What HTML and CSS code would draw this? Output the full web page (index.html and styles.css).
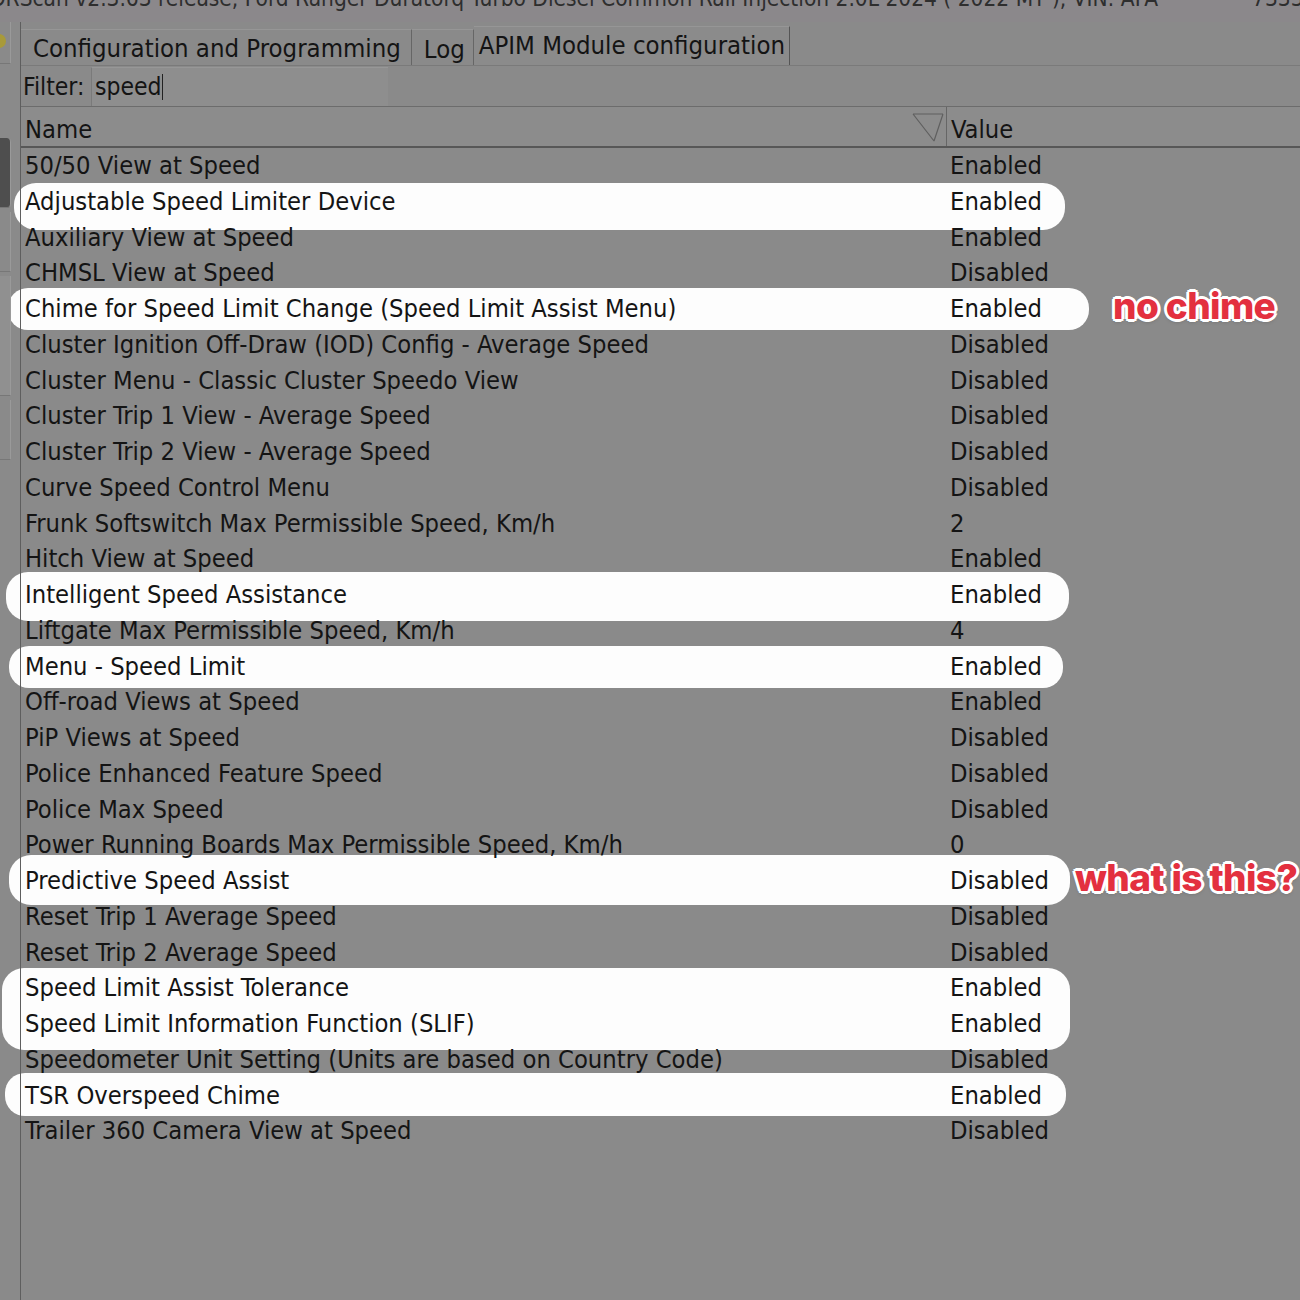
FILE: index.html
```html
<!DOCTYPE html>
<html lang="en">
<head>
  <meta charset="UTF-8" />
  <title>FORScan - APIM Module configuration</title>
  <link rel="stylesheet" href="styles.css">
</head>
<body>
  <div class="marks">
    <div class="pill pill-asld"></div>
    <div class="pill pill-chime"></div>
    <div class="pill pill-isa"></div>
    <div class="pill pill-menu"></div>
    <div class="pill pill-psa"></div>
    <div class="pill pill-slat"></div>
    <div class="pill pill-tsr"></div>
    <div class="note note-chime">no chime</div>
    <div class="note note-what">what is this?</div>
  </div>

  <div class="titlebar">
    <div class="title-text">FORScan v2.3.63 release, Ford Ranger Duratorq Turbo Diesel Common Rail Injection 2.0L 2024 ( 2022 MY ), VIN: AFA<span class="vin-tail">7333</span></div>
  </div>

  <div class="window">
    <div class="sidebar">
      <div class="side-btn side-btn-top"><span class="side-dot"></span></div>
      <div class="side-btn side-btn-dark"></div>
      <div class="side-btn side-btn-plain"></div>
      <div class="side-btn side-btn-light"></div>
      <div class="side-btn side-btn-plain"></div>
    </div>

    <div class="main">
      <div class="tabs">
        <div class="tab">Configuration and Programming</div>
        <div class="tab tab-log">Log</div>
        <div class="tab tab-active">APIM Module configuration</div>
      </div>

      <div class="filter">
        <label class="filter-label">Filter:</label>
        <div class="filter-input">speed<span class="caret"></span></div>
      </div>

      <div class="grid">
        <div class="grid-head">
          <div class="col-name">Name
            <svg class="sort" width="32" height="30" viewBox="0 0 32 30">
              <path d="M1 2 H31 M1 2 L22 29 M31 2 L22 29" fill="none" stroke="#5f5f5f" stroke-width="1.2"/>
            </svg>
          </div>
          <div class="col-value">Value</div>
        </div>
        <div id="rows"></div>
      </div>
    </div>
  </div>

  <script>
    var params = [
      ["50/50 View at Speed", "Enabled"],
      ["Adjustable Speed Limiter Device", "Enabled"],
      ["Auxiliary View at Speed", "Enabled"],
      ["CHMSL View at Speed", "Disabled"],
      ["Chime for Speed Limit Change (Speed Limit Assist Menu)", "Enabled"],
      ["Cluster Ignition Off-Draw (IOD) Config - Average Speed", "Disabled"],
      ["Cluster Menu - Classic Cluster Speedo View", "Disabled"],
      ["Cluster Trip 1 View - Average Speed", "Disabled"],
      ["Cluster Trip 2 View - Average Speed", "Disabled"],
      ["Curve Speed Control Menu", "Disabled"],
      ["Frunk Softswitch Max Permissible Speed, Km/h", "2"],
      ["Hitch View at Speed", "Enabled"],
      ["Intelligent Speed Assistance", "Enabled"],
      ["Liftgate Max Permissible Speed, Km/h", "4"],
      ["Menu - Speed Limit", "Enabled"],
      ["Off-road Views at Speed", "Enabled"],
      ["PiP Views at Speed", "Disabled"],
      ["Police Enhanced Feature Speed", "Disabled"],
      ["Police Max Speed", "Disabled"],
      ["Power Running Boards Max Permissible Speed, Km/h", "0"],
      ["Predictive Speed Assist", "Disabled"],
      ["Reset Trip 1 Average Speed", "Disabled"],
      ["Reset Trip 2 Average Speed", "Disabled"],
      ["Speed Limit Assist Tolerance", "Enabled"],
      ["Speed Limit Information Function (SLIF)", "Enabled"],
      ["Speedometer Unit Setting (Units are based on Country Code)", "Disabled"],
      ["TSR Overspeed Chime", "Enabled"],
      ["Trailer 360 Camera View at Speed", "Disabled"]
    ];

    var rows = document.getElementById("rows");
    params.forEach(function(p) {
      var row = document.createElement("div");
      row.className = "row";
      var name = document.createElement("div");
      name.className = "col-name";
      name.textContent = p[0];
      var value = document.createElement("div");
      value.className = "col-value";
      value.textContent = p[1];
      row.appendChild(name);
      row.appendChild(value);
      rows.appendChild(row);
    });
  </script>
</body>
</html>
```

FILE: styles.css
```css
* {
  box-sizing: border-box;
}

html, body {
  margin: 0;
  width: 1300px;
  height: 1300px;
  overflow: hidden;
  background: #8a8a8a;
  color: #141414;
  font-family: "DejaVu Sans Condensed", "DejaVu Sans", sans-serif;
  font-stretch: semi-condensed;
  font-size: 24.5px;
}

/* title bar, cut off at the top of the shot */
.titlebar {
  height: 22px;
  overflow: hidden;
  background: #8b888b;
  white-space: nowrap;
}

.title-text {
  margin-top: -17px;
  margin-left: -22px;
  font-size: 22.5px;
  line-height: 30px;
  color: #2e2e2e;
}

.vin-tail {
  margin-left: 94px;
}

.window {
  display: flex;
  height: 1278px;
}

.sidebar {
  width: 21px;
  flex-shrink: 0;
  border-right: 1px solid #5e5e5e;
  display: flex;
  flex-direction: column;
  gap: 4px;
  padding-right: 9px;
}

.side-btn {
  height: 60px;
  border-right: 1px solid #9a9a9a;
  border-bottom: 1px solid #777;
}

.side-btn-top {
  height: 42px;
  position: relative;
}

.side-dot {
  position: absolute;
  left: -8px;
  top: 12px;
  width: 14px;
  height: 14px;
  border-radius: 50%;
  background: #a89a3a;
}

.side-btn-dark {
  height: 70px;
  margin-top: 70px;
  background: #4e4e4e;
  border-radius: 0 4px 4px 0;
}

.side-btn-light {
  height: 120px;
  background: #909090;
}

.main {
  flex: 1;
  display: flex;
  flex-direction: column;
  min-width: 0;
}

/* tabs */
.tabs {
  height: 44px;
  display: flex;
  align-items: flex-end;
  border-bottom: 1px solid #7a7a7a;
}

.tab {
  height: 36px;
  padding: 0 10px 0 12px;
  line-height: 36px;
  font-size: 25.5px;
  border-top: 1px solid #969696;
  border-right: 1px solid #666;
  white-space: nowrap;
}

.tab-log {
  padding: 0 8px 0 12px;
  line-height: 38px;
}

.tab-active {
  height: 39px;
  padding: 0 4px 0 5px;
  line-height: 37px;
  border-right: 1.5px solid #555;
  background: #8b8b8b;
}

/* filter */
.filter {
  height: 41px;
  display: flex;
  align-items: center;
  border-bottom: 1px solid #6c6c6c;
}

.filter-label {
  padding-left: 2px;
  width: 70px;
}

.filter-input {
  width: 297px;
  height: 39px;
  padding-left: 3px;
  line-height: 38px;
  background: #8e8e8e;
  border-left: 1px solid #7a7a7a;
  border-top: 1px solid #979797;
  display: flex;
  align-items: center;
}

.caret {
  display: inline-block;
  width: 1px;
  height: 26px;
  background: #222;
}

/* grid */
.grid {
  flex: 1;
  position: relative;
  font-size: 25.3px;
}

.grid-head {
  display: flex;
  height: 41px;
  padding-top: 5px;
  line-height: 36px;
  border-bottom: 2px solid #575757;
  background: #8c8c8c;
}

.grid-head .col-name {
  position: relative;
  border-right: 1px solid #666;
  margin-top: -5px;
  padding-top: 5px;
}

.sort {
  position: absolute;
  right: 2px;
  top: 5px;
}

.row {
  display: flex;
  height: 35.75px;
  line-height: 35.75px;
  white-space: nowrap;
}

.col-name {
  width: 926px;
  padding-left: 4px;
  flex-shrink: 0;
}

.col-value {
  padding-left: 4px;
}

.row .col-value {
  padding-left: 3px;
}

/* highlighted rows and notes laid over the screenshot */
.marks {
  position: absolute;
  left: 0;
  top: 0;
  width: 1300px;
  height: 1300px;
  z-index: 0;
}

.titlebar, .window {
  position: relative;
  z-index: 1;
}

.pill {
  position: absolute;
  background: #fdfdfd;
  border-radius: 22px;
}

.pill-asld  { left: 14px; top: 183px; width: 1051px; height: 47px; }
.pill-chime { left: 8px;  top: 288px; width: 1081px; height: 42px; border-radius: 20px; }
.pill-isa   { left: 6px;  top: 572px; width: 1063px; height: 49px; }
.pill-menu  { left: 9px;  top: 646px; width: 1054px; height: 42px; border-radius: 20px; }
.pill-psa   { left: 9px;  top: 855px; width: 1061px; height: 50px; }
.pill-slat  { left: 2px;  top: 968px; width: 1068px; height: 82px; }
.pill-tsr   { left: 5px;  top: 1073px; width: 1061px; height: 43px; border-radius: 20px; }

.note {
  position: absolute;
  z-index: 2;
  font-family: Inter, "Liberation Sans", sans-serif;
  font-weight: 800;
  font-size: 37px;
  letter-spacing: -0.6px;
  color: #e3303f;
  white-space: nowrap;
  text-shadow:
    3px 0 0 #fff, -3px 0 0 #fff, 0 3px 0 #fff, 0 -3px 0 #fff,
    2px 2px 0 #fff, -2px 2px 0 #fff, 2px -2px 0 #fff, -2px -2px 0 #fff,
    0 2px 4px rgba(0,0,0,0.35);
}

.note-chime { left: 1113px; top: 283px; }
.note-what  { left: 1075px; top: 855px; }
```
